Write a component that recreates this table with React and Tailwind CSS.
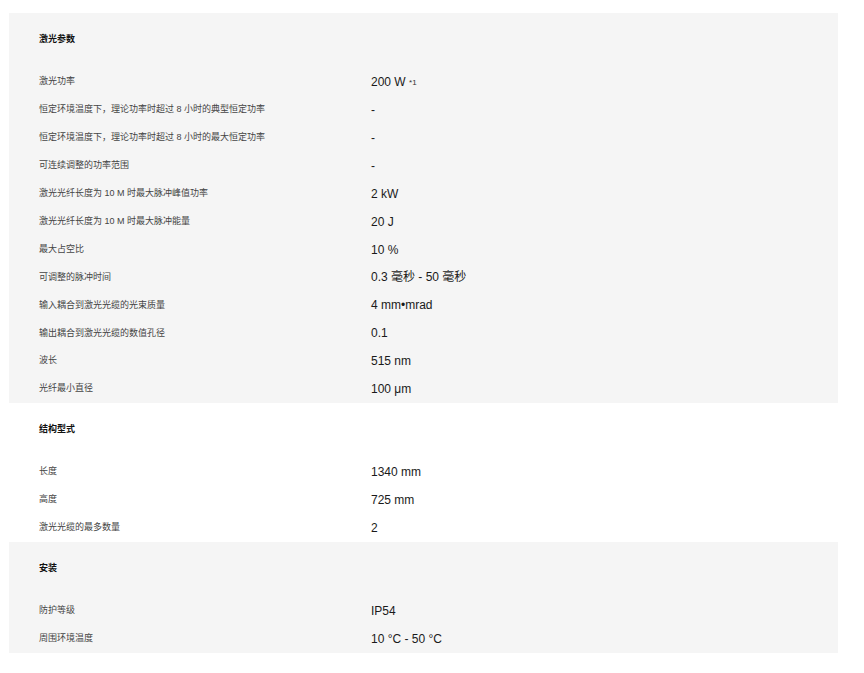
import React from "react";

const sections = [
  {
    title: "激光参数",
    bg: "bg-[#f5f5f5]",
    rows: [
      ["激光功率", <>200 W <sup className="text-[8px] relative -top-[1px] text-[#333]">*1</sup></>],
      ["恒定环境温度下，理论功率时超过 8 小时的典型恒定功率", "-"],
      ["恒定环境温度下，理论功率时超过 8 小时的最大恒定功率", "-"],
      ["可连续调整的功率范围", "-"],
      ["激光光纤长度为 10 M 时最大脉冲峰值功率", "2 kW"],
      ["激光光纤长度为 10 M 时最大脉冲能量", "20 J"],
      ["最大占空比", "10 %"],
      ["可调整的脉冲时间", "0.3 毫秒 - 50 毫秒"],
      ["输入耦合到激光光缆的光束质量", "4 mm•mrad"],
      ["输出耦合到激光光缆的数值孔径", "0.1"],
      ["波长", "515 nm"],
      ["光纤最小直径", "100 μm"],
    ],
  },
  {
    title: "结构型式",
    bg: "bg-white",
    rows: [
      ["长度", "1340 mm"],
      ["高度", "725 mm"],
      ["激光光缆的最多数量", "2"],
    ],
  },
  {
    title: "安装",
    bg: "bg-[#f5f5f5]",
    rows: [
      ["防护等级", "IP54"],
      ["周围环境温度", "10 °C - 50 °C"],
    ],
  },
];

export default function App() {
  return (
    <div
      className="min-h-[673px] w-[864px] bg-white pt-[13px] pl-[9px]"
      style={{ fontFamily: '"Liberation Sans", "Noto Sans CJK SC", sans-serif' }}
    >
      <div className="w-[829px]">
        {sections.map((s) => (
          <div key={s.title} className={s.bg}>
            <div className="h-[55.3px] pl-[30px] pt-[20px]">
              <div className="text-[9px] leading-[12px] font-bold text-[#111]">{s.title}</div>
            </div>
            {s.rows.map(([label, value], i) => (
              <div key={i} className="flex h-[27.9px] items-center">
                <div className="w-[362px] pl-[30px] text-[9px] text-[#444]">{label}</div>
                <div className="text-[12px] text-[#1a1a1a]">{value}</div>
              </div>
            ))}
          </div>
        ))}
      </div>
    </div>
  );
}
